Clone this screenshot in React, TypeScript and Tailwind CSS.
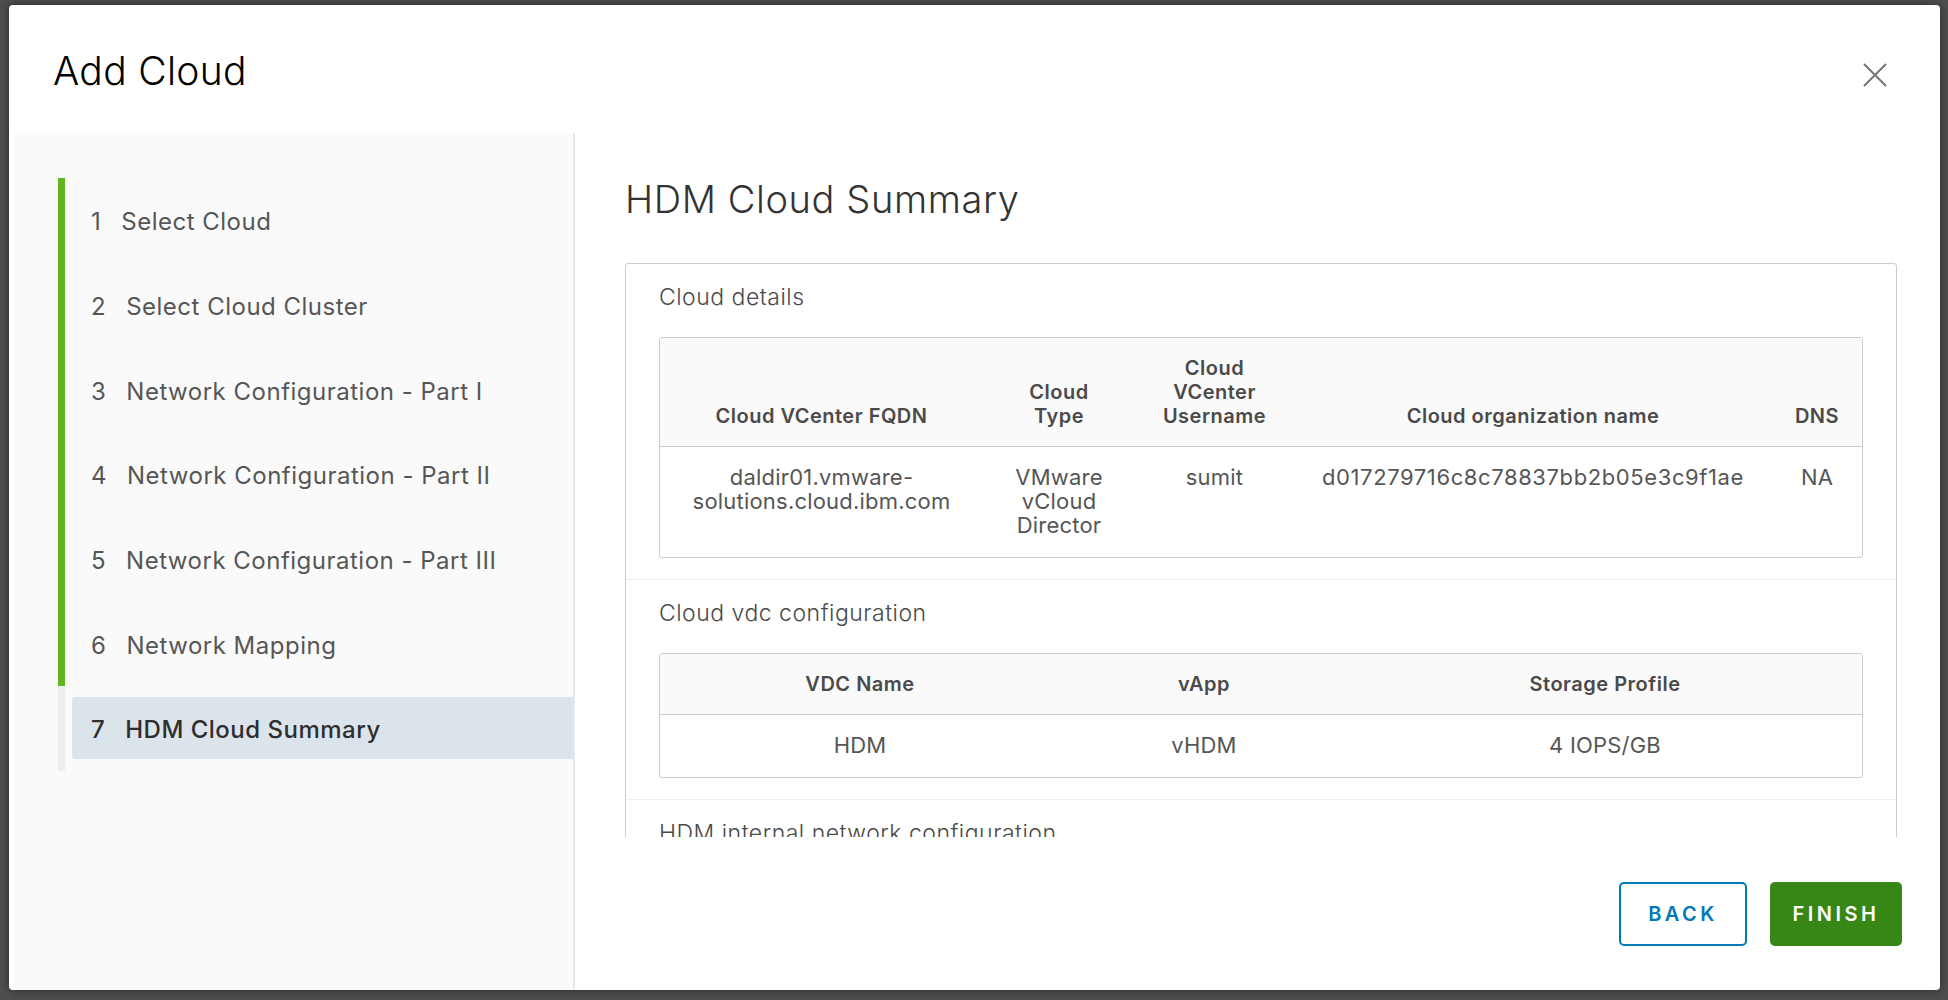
import * as React from "react";

interface IStep {
  num: number;
  label: string;
}

const STEPS: IStep[] = [
  { num: 1, label: "Select Cloud" },
  { num: 2, label: "Select Cloud Cluster" },
  { num: 3, label: "Network Configuration - Part I" },
  { num: 4, label: "Network Configuration - Part II" },
  { num: 5, label: "Network Configuration - Part III" },
  { num: 6, label: "Network Mapping" },
  { num: 7, label: "HDM Cloud Summary" },
];

const ACTIVE_STEP: number = 7;

function StepNav(): React.ReactElement {
  return (
    <div className="pt-[45px] pl-[44px]">
      {STEPS.map(function (step: IStep) {
        const isActive: boolean = step.num === ACTIVE_STEP;
        return (
          <div key={step.num} className="flex h-[84.67px]">
            <div className={isActive ? "w-[7px] bg-[#eeeeee]" : "w-[7px] bg-[#62b51c]"} />
            <div className="flex-1 flex items-center pl-[7px]">
              <div
                className={
                  "w-full h-[62px] flex items-center pl-[19px] pt-[4px] rounded-l-[3px] text-[24px] tracking-[0.5px] " +
                  (isActive ? "bg-[#dce4eb] text-[#2e2e2e] font-medium" : "text-[#565656]")
                }
              >
                <span className="mr-[20px]">{step.num}</span>
                <span>{step.label}</span>
              </div>
            </div>
          </div>
        );
      })}
    </div>
  );
}

function CloseIcon(): React.ReactElement {
  return (
    <svg width="26" height="26" viewBox="0 0 26 26" fill="none">
      <path d="M2 2 L24 24 M24 2 L2 24" stroke="#747474" strokeWidth="2" />
    </svg>
  );
}

const TH: string =
  "align-bottom px-[10px] py-[18px] text-[20px] leading-[24px] font-semibold tracking-[0.5px] text-[#4a4a4a] bg-[#fafafa] border-b border-[#cccccc] text-center";
const TD: string =
  "align-top px-[10px] pt-[18px] pb-[20px] text-[22px] leading-[24px] tracking-[0.2px] text-[#565656] text-center";

function CloudDetailsTable(): React.ReactElement {
  return (
    <table className="w-full table-fixed border-separate border-spacing-0 border border-[#cccccc] rounded-[3px]">
      <colgroup>
        <col className="w-[323px]" />
        <col className="w-[152px]" />
        <col className="w-[159px]" />
        <col className="w-[478px]" />
        <col />
      </colgroup>
      <thead>
        <tr>
          <th className={TH + " rounded-tl-[3px]"}>Cloud VCenter FQDN</th>
          <th className={TH}>
            Cloud
            <br />
            Type
          </th>
          <th className={TH}>
            Cloud
            <br />
            VCenter
            <br />
            Username
          </th>
          <th className={TH}>Cloud organization name</th>
          <th className={TH + " rounded-tr-[3px]"}>DNS</th>
        </tr>
      </thead>
      <tbody>
        <tr>
          <td className={TD}>
            daldir01.vmware-
            <br />
            solutions.cloud.ibm.com
          </td>
          <td className={TD}>
            VMware
            <br />
            vCloud
            <br />
            Director
          </td>
          <td className={TD}>sumit</td>
          <td className={TD + " whitespace-nowrap tracking-[0.6px]"}>d017279716c8c78837bb2b05e3c9f1ae</td>
          <td className={TD}>NA</td>
        </tr>
      </tbody>
    </table>
  );
}

function VdcTable(): React.ReactElement {
  return (
    <table className="w-full table-fixed border-separate border-spacing-0 border border-[#cccccc] rounded-[3px]">
      <colgroup>
        <col className="w-[400px]" />
        <col className="w-[288px]" />
        <col />
      </colgroup>
      <thead>
        <tr>
          <th className={TH + " rounded-tl-[3px]"}>VDC Name</th>
          <th className={TH}>vApp</th>
          <th className={TH + " rounded-tr-[3px]"}>Storage Profile</th>
        </tr>
      </thead>
      <tbody>
        <tr>
          <td className={TD}>HDM</td>
          <td className={TD}>vHDM</td>
          <td className={TD}>4 IOPS/GB</td>
        </tr>
      </tbody>
    </table>
  );
}

function Section({ title, children }: { title: string; children?: React.ReactNode }): React.ReactElement {
  return (
    <div className="px-[33px] pt-[17px] pb-[21px] border-b border-[#eeeeee]">
      <h4 className="text-[23px] leading-[32px] font-light tracking-[0.5px] text-[#4a4a4a] mb-[24px]">{title}</h4>
      {children}
    </div>
  );
}

export default function App(): React.ReactElement {
  return (
    <div
      className="w-full h-[1000px] bg-[#4e4e4e] pl-[9px] pt-[5px] overflow-hidden"
      style={{ fontFamily: "Inter, 'Open Sans', sans-serif" }}
    >
      <div className="w-[1931px] h-[985px] bg-white rounded-[4px] shadow-[0_0_10px_rgba(0,0,0,0.45)] flex flex-col">
        <div className="h-[128px] flex items-start justify-between pl-[44px] pr-[52px]">
          <h3 className="pt-[42px] text-[39px] leading-[47px] font-light text-[#000000] tracking-[0.3px]">Add Cloud</h3>
          <button className="mt-[57px]">
            <CloseIcon />
          </button>
        </div>
        <div className="flex-1 flex min-h-0">
          <div className="ml-[5px] w-[561px] bg-[#fafafa] border-r-2 border-[#e8e8e8] rounded-bl-[4px]">
            <StepNav />
          </div>
          <div className="flex-1 flex flex-col min-w-0">
            <div className="h-[704px] overflow-hidden pl-[50px] pr-[43px]">
              <h2 className="pt-[43px] text-[38px] leading-[46px] font-light text-[#333333] tracking-[0.6px]">
                HDM Cloud Summary
              </h2>
              <div className="mt-[41px] border border-[#cccccc] rounded-[3px]">
                <Section title="Cloud details">
                  <CloudDetailsTable />
                </Section>
                <Section title="Cloud vdc configuration">
                  <VdcTable />
                </Section>
                <Section title="HDM internal network configuration">
                  <div className="h-[120px]" />
                </Section>
              </div>
            </div>
            <div className="flex-1 flex justify-end items-start pt-[45px] pr-[38px] gap-[23px]">
              <button className="w-[128px] h-[64px] border-2 border-[#0079b8] rounded-[5px] text-[#0079b8] text-[20px] font-semibold tracking-[3.5px] bg-white">
                BACK
              </button>
              <button className="w-[132px] h-[64px] rounded-[5px] bg-[#378716] text-white text-[20px] font-semibold tracking-[3.5px]">
                FINISH
              </button>
            </div>
          </div>
        </div>
      </div>
    </div>
  );
}
